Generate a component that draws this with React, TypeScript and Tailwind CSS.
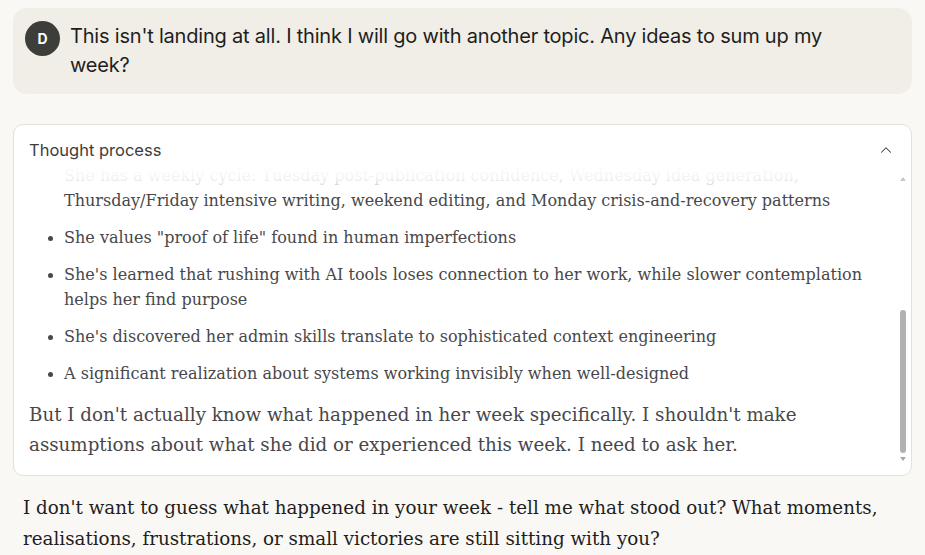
import { ChevronUp } from 'lucide-react';

const serif = { fontFamily: '"DejaVu Serif", "Liberation Serif", serif' };

const bullets = [
    'She values "proof of life" found in human imperfections',
    "She's learned that rushing with AI tools loses connection to her work, while slower contemplation helps her find purpose",
    "She's discovered her admin skills translate to sophisticated context engineering",
    'A significant realization about systems working invisibly when well-designed',
];

export default function App() {
    return (
        <div className="min-h-[555px] w-[925px] bg-[#f9f8f5] pt-2 font-['Inter',sans-serif] text-[#1f1e1d]">
            {/* User message */}
            <div className="mx-[13px] flex items-start gap-[10px] rounded-[14px] bg-[#f0eee7] pl-3 pr-[60px] pt-[13px] pb-[14px]">
                <div className="flex h-[35px] w-[35px] shrink-0 items-center justify-center rounded-full bg-[#3d3d3a] text-[14px] font-bold text-white">
                    D
                </div>
                <p className="pt-[1px] text-[20px] leading-[29px] tracking-[-0.2px]">
                    This isn't landing at all. I think I will go with another topic. Any ideas to sum up my week?
                </p>
            </div>

            {/* Thought process */}
            <div className="mx-[13px] mt-[30px] rounded-[10px] border border-[#e3e1da] bg-white">
                <div className="flex items-center justify-between pl-[15px] pr-[16px] pt-[13px] pb-[2px]">
                    <span className="text-[16.5px] text-[#3d3d3a]">Thought process</span>
                    <ChevronUp className="h-[18px] w-[18px] text-[#3d3d3a]" strokeWidth={1.4} />
                </div>
                <div className="relative">
                    <div className="flex h-[310px] flex-col justify-end overflow-hidden pl-[15px] pr-[30px] pb-[15px] text-[#48474a]" style={serif}>
                        <ul className="flex flex-col gap-[12px] pl-[35px] text-[16.05px] leading-[25px]">
                            <li className="relative">
                                <span className="text-[#c4c3c0]">She has a weekly cycle: Tuesday post-publication confidence, Wednesday idea generation,</span>{' '}
                                Thursday/Friday intensive writing, weekend editing, and Monday crisis-and-recovery patterns
                            </li>
                            {bullets.map((b) => (
                                <li key={b} className="relative">
                                    <span className="absolute -left-[16px] top-[11px] h-[5px] w-[5px] rounded-full bg-[#48474a]" />
                                    {b}
                                </li>
                            ))}
                        </ul>
                        <p className="mt-[14px] text-[18.25px] leading-[30px]">
                            But I don't actually know what happened in her week specifically. I shouldn't make assumptions about what she did or experienced this week. I need to ask her.
                        </p>
                    </div>
                    <div className="pointer-events-none absolute inset-x-0 top-0 h-[26px] bg-gradient-to-b from-white via-white/80 to-white/0" />
                    {/* scrollbar */}
                    <div className="absolute right-[3px] top-[12px] flex h-[296px] w-[10px] flex-col items-center">
                        <span className="h-0 w-0 border-x-[3px] border-b-[4px] border-x-transparent border-b-[#c7c7c7]" />
                        <div className="mt-[129px] h-[143px] w-[6px] rounded-full bg-[#b1b1b1]" />
                        <span className="mt-[4px] h-0 w-0 border-x-[3px] border-t-[4px] border-x-transparent border-t-[#a8a8a8]" />
                    </div>
                </div>
            </div>

            {/* Assistant reply */}
            <p className="px-[23px] pt-[16px] text-[18.3px] leading-[31px] text-[#1f1e1d]" style={serif}>
                I don't want to guess what happened in your week - tell me what stood out? What moments, realisations, frustrations, or small victories are still sitting with you?
            </p>
        </div>
    );
}
